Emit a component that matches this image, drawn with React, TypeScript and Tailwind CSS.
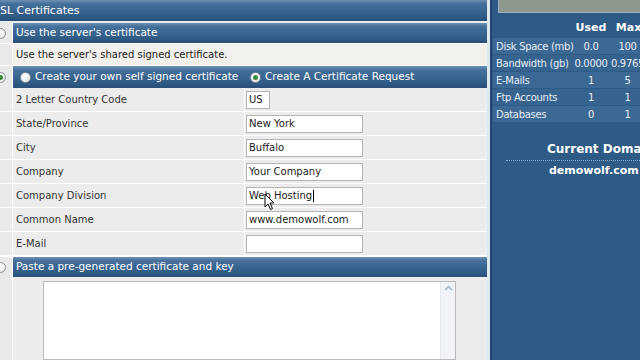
import React from "react";

const bar =
  "bg-[linear-gradient(to_bottom,#6f90b3_0%,#45709b_18%,#3a6590_50%,#2f5a84_80%,#284f77_100%)]";

function Radio({ checked, className = "" }: { checked?: boolean; className?: string }) {
  return (
    <span
      className={`inline-flex items-center justify-center w-[11px] h-[11px] rounded-full border border-[#8a8f96] bg-[radial-gradient(circle_at_40%_35%,#ffffff,#dde3e8)] shrink-0 ${className}`}
    >
      {checked && <span className="w-[5px] h-[5px] rounded-full bg-[#3f8a3a]" />}
    </span>
  );
}

function FormRow({ label, value, w = "w-[117px]", caret }: { label: string; value: string; w?: string; caret?: boolean }) {
  return (
    <div className="flex h-[24px] border-b border-white">
      <div className="w-[13px] bg-[#e9e9e9] border-r border-white shrink-0" />
      <div className="w-[232px] bg-[#ececec] flex items-center pl-[3px] border-r border-white shrink-0 text-[#333]">{label}</div>
      <div className="flex-1 bg-[#ececec] flex items-center pl-[1px]">
        <div className={`${w} h-[18px] bg-white border border-[#b5b5b5] flex items-center pl-[2px] text-[#222]`}>
          {value}
          {caret && <span className="inline-block w-[1px] h-[12px] bg-black ml-[1px]" />}
        </div>
      </div>
    </div>
  );
}

export default function App() {
  const font = { fontFamily: '"DejaVu Sans", Verdana, sans-serif' };
  return (
    <div className="w-[640px] h-[360px] overflow-hidden flex bg-white text-[10px] relative" style={font}>
      {/* main */}
      <div className="w-[487px] shrink-0 flex flex-col bg-white">
        <div className={`h-[21px] ${bar} flex items-center text-white text-[11px] pt-[1px]`}>
          <span className="ml-[-7px]">SSL Certificates</span>
        </div>
        <div className="h-[2px] bg-[#e8eef4]" />
        {/* row 1 */}
        <div className="flex h-[20px]">
          <div className="w-[13px] bg-[#e9e9e9] flex items-center border-r border-white overflow-hidden">
            <Radio className="ml-[-5px]" />
          </div>
          <div className={`flex-1 ${bar} flex items-center pl-[3px] text-white text-[10.5px]`}>Use the server's certificate</div>
        </div>
        {/* row 2 */}
        <div className="flex h-[23px] border-y border-white">
          <div className="w-[13px] bg-[#e9e9e9] border-r border-white" />
          <div className="flex-1 bg-[#f1f0ec] flex items-center pl-[3px] text-[#222]">Use the server's shared signed certificate.</div>
        </div>
        {/* row 3 */}
        <div className="flex h-[22px]">
          <div className="w-[13px] bg-[#e9e9e9] flex items-center border-r border-white overflow-hidden">
            <Radio checked className="ml-[-5px]" />
          </div>
          <div className={`flex-1 ${bar} flex items-center pl-[7px] text-white text-[10.5px]`}>
            <Radio />
            <span className="ml-[4px] w-[215px]">Create your own self signed certificate</span>
            <Radio checked />
            <span className="ml-[4px]">Create A Certificate Request</span>
          </div>
        </div>
        <FormRow label="2 Letter Country Code" value="US" w="w-[24px]" />
        <FormRow label="State/Province" value="New York" />
        <FormRow label="City" value="Buffalo" />
        <FormRow label="Company" value="Your Company" />
        <FormRow label="Company Division" value="Web Hosting" caret />
        <FormRow label="Common Name" value="www.demowolf.com" />
        <FormRow label="E-Mail" value="" />
        <div className="h-[1px] bg-white" />
        {/* paste row */}
        <div className="flex h-[20px]">
          <div className="w-[13px] bg-[#e9e9e9] flex items-center border-r border-white overflow-hidden">
            <Radio className="ml-[-5px]" />
          </div>
          <div className={`flex-1 ${bar} flex items-center pl-[3px] text-white text-[10.5px]`}>Paste a pre-generated certificate and key</div>
        </div>
        <div className="flex flex-1">
          <div className="w-[13px] bg-[#e9e9e9] border-r border-white" />
          <div className="flex-1 bg-[#ececec] pt-[4px] pl-[30px] pr-[31px]">
            <div className="h-full bg-white border border-[#b9b9b9] flex justify-end">
              <div className="w-[15px] bg-[#f0f4f8] border-l border-[#e4e9ee] flex justify-center pt-[3px]">
                <svg width="9" height="6" viewBox="0 0 9 6">
                  <path d="M1 5 L4.5 1.5 L8 5" stroke="#9fb2c6" strokeWidth="1.5" fill="none" />
                </svg>
              </div>
            </div>
          </div>
        </div>
      </div>
      {/* separator */}
      <div className="w-[3px] bg-[#dfe7ef] shrink-0" />
      <div className="w-[2px] bg-[#24496e] shrink-0" />
      {/* sidebar */}
      <div className="flex-1 bg-[#2e5a86] flex flex-col text-[#e6eef6]">
        <div className="ml-[6px] h-[13px] border-x border-b border-[#9fb2c0] bg-[#8d998d]" />
        <div className="flex mt-[8px] h-[14px] items-center font-bold text-white text-[11px]">
          <div className="w-[80px]" />
          <div className="w-[38px] text-center">Used</div>
          <div className="w-[35px] text-center pl-[2px] whitespace-nowrap">Max</div>
        </div>
        <div className="flex flex-col gap-[1px] mt-[3px] ml-[1px]">
          {[
            ["Disk Space (mb)", "0.0", "100"],
            ["Bandwidth (gb)", "0.0000", "0.9765"],
            ["E-Mails", "1", "5"],
            ["Ftp Accounts", "1", "1"],
            ["Databases", "0", "1"],
          ].map((r, i) => (
            <div key={i} className={`flex h-[16px] items-center tracking-[-0.3px] ${i % 2 === 0 ? "bg-[#3c6894]" : "bg-[#37638f]"}`}>
              <div className="w-[79px] pl-[3px] whitespace-nowrap">{r[0]}</div>
              <div className="w-[38px] text-center">{r[1]}</div>
              <div className="w-[35px] text-center whitespace-nowrap">{r[2]}</div>
            </div>
          ))}
        </div>
        <div className="mt-[18px] pl-[55px] font-bold text-white text-[12px] whitespace-nowrap">Current Domain</div>
        <div className="ml-[14px] mt-[2px] border-t border-dotted border-[#8fb0d0]" />
        <div className="mt-[2px] pl-[57px] font-bold text-white text-[11px] whitespace-nowrap">demowolf.com</div>
      </div>
      {/* mouse cursor */}
      <svg className="absolute left-[264px] top-[193px]" width="12" height="18" viewBox="0 0 12 18">
        <path d="M1 1 L1 14 L4 11 L6.5 16.5 L8.5 15.5 L6 10 L10 10 Z" fill="white" stroke="black" strokeWidth="1" />
      </svg>
    </div>
  );
}
